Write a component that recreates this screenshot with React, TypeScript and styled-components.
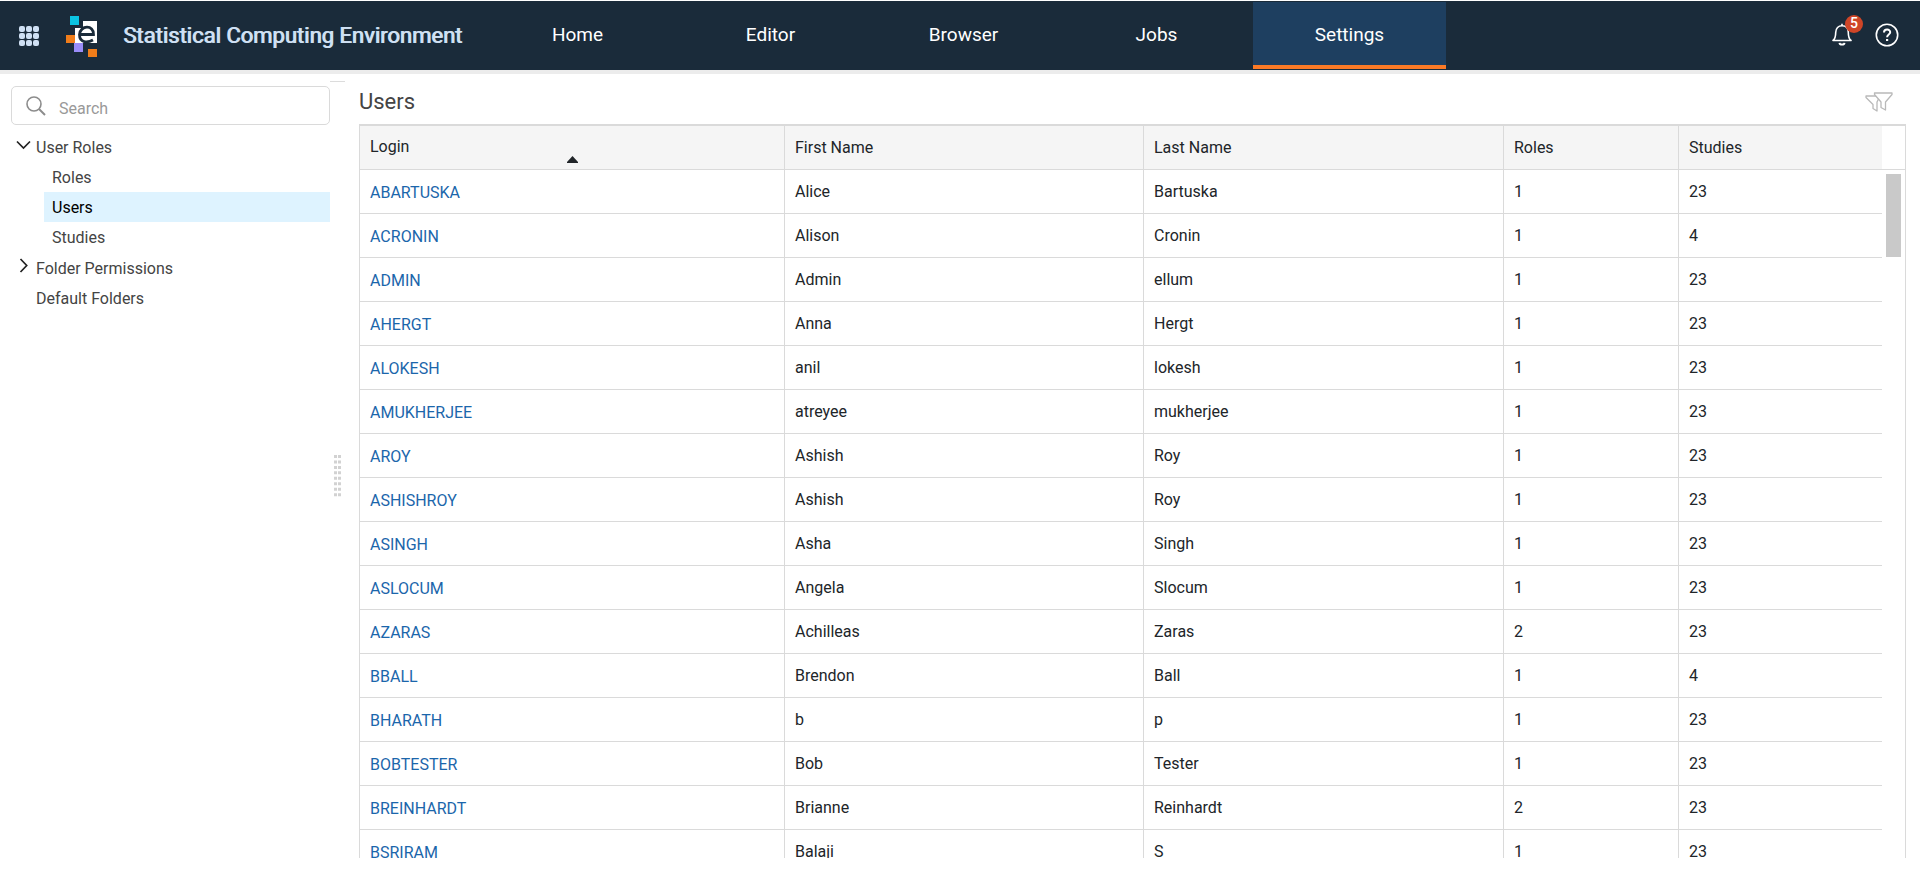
import React from "react";
import styled, { createGlobalStyle } from "styled-components";

const GlobalStyle = createGlobalStyle`
  *, *::before, *::after { box-sizing: border-box; }
  body {
    margin: 0;
    background: #fff;
    color: #212529;
    font: 16px/24px Roboto, "Liberation Sans", sans-serif;
  }
  button, input { font: inherit; }
`;

const Page = styled.div`
  display: flex;
  flex-direction: column;
  height: 100vh;
  padding: 1px 0 12px;
  overflow: hidden;
`;

const Header = styled.header`
  display: flex;
  flex: none;
  align-items: center;
  height: 69px;
  padding: 0 10px 0 19px;
  background: #1a2b3a;
  box-shadow: 0 4px 0 #ececec;
`;

const Brand = styled.div`
  display: flex;
  flex: none;
  align-items: center;
  width: 462px;
`;

const IconButton = styled.button`
  position: relative;
  display: flex;
  padding: 0;
  border: 0;
  background: none;
  cursor: pointer;
`;

const LogoArt = styled.svg`
  flex: none;
  margin: 2px 26px 0 25px;
`;

const BrandName = styled.span`
  color: #cfe0f3;
  font-size: 22px;
  font-weight: 400;
  text-shadow: 1px 0 0 #cfe0f3;
  white-space: nowrap;
`;

const Nav = styled.nav`
  display: flex;
  align-self: stretch;
  padding: 1px 0;
`;

const NavLink = styled.a<{ $active?: boolean }>`
  display: flex;
  align-items: center;
  justify-content: center;
  width: 193px;
  padding-top: 3px;
  border-bottom: 4px solid ${(p) => (p.$active ? "#fb7a26" : "transparent")};
  background: ${(p) => (p.$active ? "#1e3f60" : "transparent")};
  color: #fff;
  font-size: 19px;
  text-decoration: none;
`;

const HeaderActions = styled.div`
  display: flex;
  gap: 23px;
  align-items: center;
  margin-left: auto;
  padding: 0 11px 2px 0;
`;

const Badge = styled.span`
  position: absolute;
  top: -8px;
  right: -11px;
  width: 18px;
  height: 18px;
  border-radius: 50%;
  background: #cf4527;
  color: #fff;
  font-size: 14px;
  font-weight: 500;
  line-height: 17px;
  text-align: center;
`;

const Body = styled.div`
  display: flex;
  flex: 1;
  min-height: 0;
`;

const Sidebar = styled.aside`
  flex: none;
  width: 330px;
  padding: 16px 0 0 11px;
`;

const SearchBox = styled.label`
  display: flex;
  align-items: center;
  gap: 13px;
  height: 39px;
  padding-left: 14px;
  border: 1px solid #dadada;
  border-radius: 5px;
`;

const SearchInput = styled.input`
  flex: 1;
  min-width: 0;
  padding: 7px 0 0;
  border: 0;
  outline: 0;
  background: none;
  color: #212529;
  &::placeholder { color: #999; opacity: 1; }
`;

const Tree = styled.ul`
  margin: 0;
  padding: 7px 0 0;
  list-style: none;
`;

const SubTree = styled.ul`
  margin: 0;
  padding: 0 0 1px 33px;
  list-style: none;
`;

const TreeButton = styled.button`
  display: flex;
  align-items: center;
  width: 100%;
  height: 30px;
  padding: 2px 0 0;
  border: 0;
  background: none;
  color: #444;
  text-align: left;
`;

const Twisty = styled.span`
  display: flex;
  width: 25px;
  padding: 0 0 7px 5px;
`;

const TreeLeaf = styled.a<{ $active?: boolean }>`
  display: block;
  height: 30px;
  padding: 4px 0 0 8px;
  background: ${(p) => (p.$active ? "#def3ff" : "transparent")};
  color: ${(p) => (p.$active ? "#000" : "#444")};
  text-decoration: none;
`;

const Splitter = styled.div`
  display: flex;
  flex: none;
  flex-direction: column;
  align-items: center;
  justify-content: center;
  width: 15px;
  margin-top: 11px;
  padding-top: 10px;
  border-top: 1px solid #dcdcdc;
`;

const Main = styled.main`
  display: flex;
  flex: 1;
  flex-direction: column;
  min-width: 0;
  padding: 0 14px;
`;

const TitleBar = styled.div`
  display: flex;
  flex: none;
  align-items: center;
  justify-content: space-between;
  height: 54px;
  padding: 9px 13px 0 0;
`;

const Title = styled.h1`
  margin: 0;
  color: #444;
  font-size: 22px;
  font-weight: 400;
`;

const Grid = styled.div`
  display: flex;
  flex: 1;
  min-height: 0;
  overflow: hidden;
  border: 1px solid #dadada;
  border-top-width: 2px;
  border-bottom: 0;
`;

const Table = styled.table`
  flex: 1;
  align-self: flex-start;
  min-width: 0;
  table-layout: fixed;
  border-collapse: separate;
  border-spacing: 0;
`;

const HeadCell = styled.th`
  height: 44px;
  padding: 0 10px;
  border-right: 1px solid #dadada;
  border-bottom: 1px solid #dadada;
  background: #f5f5f5;
  font-weight: 400;
  text-align: left;
  &:last-child { border-right: 0; }
`;

const SortButton = styled.button`
  display: grid;
  align-content: start;
  width: 100%;
  height: 43px;
  padding: 9px 0 0;
  border: 0;
  background: none;
  color: inherit;
  text-align: left;
`;

const SortArrow = styled.svg`
  justify-self: center;
  margin-top: -3px;
`;

const Cell = styled.td`
  height: 44px;
  padding: 1px 10px 0;
  border-right: 1px solid #dadada;
  border-bottom: 1px solid #dadada;
  &:last-child { border-right: 0; }
`;

const LoginCell = styled(Cell)`
  padding: 3px 10px 0;
`;

const LoginLink = styled.a`
  color: #1b66ab;
  text-decoration: none;
`;

const Gutter = styled.div`
  flex: none;
  width: 23px;
  padding: 0 4px;
`;

const GutterHead = styled.div`
  height: 44px;
  margin: 0 -4px 4px;
  border-bottom: 1px solid #dadada;
`;

const Thumb = styled.div`
  height: 83px;
  background: #c9c9c9;
`;

const pages = ["Home", "Editor", "Browser", "Jobs", "Settings"];

const columns = [
  { name: "Login", width: 425 },
  { name: "First Name", width: 359 },
  { name: "Last Name", width: 360 },
  { name: "Roles", width: 175 },
  { name: "Studies", width: 203 },
];

const users: [string, string, string, number, number][] = [
  ["ABARTUSKA", "Alice", "Bartuska", 1, 23],
  ["ACRONIN", "Alison", "Cronin", 1, 4],
  ["ADMIN", "Admin", "ellum", 1, 23],
  ["AHERGT", "Anna", "Hergt", 1, 23],
  ["ALOKESH", "anil", "lokesh", 1, 23],
  ["AMUKHERJEE", "atreyee", "mukherjee", 1, 23],
  ["AROY", "Ashish", "Roy", 1, 23],
  ["ASHISHROY", "Ashish", "Roy", 1, 23],
  ["ASINGH", "Asha", "Singh", 1, 23],
  ["ASLOCUM", "Angela", "Slocum", 1, 23],
  ["AZARAS", "Achilleas", "Zaras", 2, 23],
  ["BBALL", "Brendon", "Ball", 1, 4],
  ["BHARATH", "b", "p", 1, 23],
  ["BOBTESTER", "Bob", "Tester", 1, 23],
  ["BREINHARDT", "Brianne", "Reinhardt", 2, 23],
  ["BSRIRAM", "Balaji", "S", 1, 23],
];

const AppsIcon = () => (
  <svg width="22" height="22" fill="#cfe0f3" aria-hidden="true">
    {[1, 8, 15].map((y) =>
      [0, 7, 14].map((x) => <rect key={`${x}-${y}`} x={x} y={y} width="6" height="6" rx="2" />)
    )}
  </svg>
);

const Logo = () => (
  <LogoArt width="31" height="41" viewBox="0 0 31 41" role="img" aria-label="Company logo">
    <path d="M9 12h8V5h14v22H9z" fill="#fff" />
    <path d="M4 0h9v9H4z" fill="#0bc4e2" />
    <path d="M0 19h9v8H0z" fill="#f07d1a" />
    <path d="M8 27h9v9H8z" fill="#9a8cf8" />
    <path d="M22 33h9v8h-9z" fill="#f07d1a" />
    <path d="M13.500 18.500h14c.6-10-13.500-9.500-14 0c0 8.500 8 8.500 13.500 5.500" fill="none" stroke="#1a2b3a" strokeWidth="2.800" />
  </LogoArt>
);

const BellIcon = () => (
  <svg width="20" height="23" viewBox="0 0 20 23" fill="none" stroke="#fff" strokeWidth="1.600" aria-hidden="true">
    <path d="M10 .8v2M1 17.500c2-1.500 2.700-3.500 2.700-8C3.700 5 6.500 2.800 10 2.800s6.300 2.200 6.300 6.700c0 4.500.700 6.500 2.700 8z" strokeLinejoin="round" />
    <path d="M7.500 19.800c.4 2.400 4.600 2.400 5 0" strokeWidth="2" />
  </svg>
);

const HelpIcon = () => (
  <svg width="24" height="24" viewBox="0 0 24 24" fill="none" stroke="#fff" aria-hidden="true">
    <circle cx="12" cy="12" r="10.700" strokeWidth="1.600" />
    <path d="M9 9.600c0-4 6.200-4 6.200-.4 0 2.400-3.100 2.300-3.100 5" strokeWidth="2" />
    <path d="M11 16h2.200v2H11z" fill="#fff" stroke="none" />
  </svg>
);

const SearchIcon = () => (
  <svg width="20" height="20" viewBox="0 0 20 20" fill="none" stroke="#8c8c8c" strokeWidth="1.600" aria-hidden="true">
    <circle cx="8" cy="8" r="7" />
    <path d="M13 13l6 6" strokeWidth="2" />
  </svg>
);

const ChevronIcon = ({ open }: { open?: boolean }) => (
  <svg width="15" height="15" viewBox="0 0 15 15" fill="none" stroke="#222" strokeWidth="1.700" aria-hidden="true">
    <path d={open ? "M1 4.500l6.500 6.500L14 4.500" : "M4.500 1l6.200 6.500L4.500 14"} />
  </svg>
);

const FilterIcon = () => (
  <svg width="28" height="20" viewBox="0 0 28 20" fill="#fff" stroke="#b9b9b9" strokeWidth="1.300" strokeLinejoin="round" aria-hidden="true">
    <path d="M1 4h14l-3 6v9l-4-2.500V12.500L1 5.500z" />
    <path d="M9.500 1H27v1.500L20.500 10v8L16 15.500V10L9.500 2.500z" />
  </svg>
);

const GripDots = () => (
  <svg width="7" height="43" fill="#d2d2d2" aria-hidden="true">
    {Array.from({ length: 8 }, (_, i) => (
      <path key={i} d={`M0 ${1 + i * 5.45}h3v3h-3zM4 ${1 + i * 5.45}h3v3h-3z`} />
    ))}
  </svg>
);

export default function App() {
  return (
    <Page>
      <GlobalStyle />
      <Header>
        <Brand>
          <IconButton type="button" aria-label="Applications"><AppsIcon /></IconButton>
          <Logo />
          <BrandName>Statistical Computing Environment</BrandName>
        </Brand>
        <Nav>
          {pages.map((page) => (
            <NavLink key={page} href={`#${page.toLowerCase()}`} $active={page === "Settings"}>{page}</NavLink>
          ))}
        </Nav>
        <HeaderActions>
          <IconButton type="button" aria-label="Notifications">
            <BellIcon />
            <Badge>5</Badge>
          </IconButton>
          <IconButton type="button" aria-label="Help"><HelpIcon /></IconButton>
        </HeaderActions>
      </Header>
      <Body>
        <Sidebar>
          <SearchBox>
            <SearchIcon />
            <SearchInput type="text" placeholder="Search" aria-label="Search" />
          </SearchBox>
          <Tree>
            <li>
              <TreeButton type="button" aria-expanded="true"><Twisty><ChevronIcon open /></Twisty>User Roles</TreeButton>
              <SubTree>
                <li><TreeLeaf href="#roles">Roles</TreeLeaf></li>
                <li><TreeLeaf href="#users" $active>Users</TreeLeaf></li>
                <li><TreeLeaf href="#studies">Studies</TreeLeaf></li>
              </SubTree>
            </li>
            <li><TreeButton type="button" aria-expanded="false"><Twisty><ChevronIcon /></Twisty>Folder Permissions</TreeButton></li>
            <li><TreeButton type="button"><Twisty />Default Folders</TreeButton></li>
          </Tree>
        </Sidebar>
        <Splitter role="separator" aria-orientation="vertical"><GripDots /></Splitter>
        <Main>
          <TitleBar>
            <Title>Users</Title>
            <IconButton type="button" aria-label="Filters"><FilterIcon /></IconButton>
          </TitleBar>
          <Grid>
            <Table>
              <colgroup>
                {columns.map((c) => <col key={c.name} width={c.width} />)}
              </colgroup>
              <thead>
                <tr>
                  {columns.map((c, i) => (
                    <HeadCell key={c.name} scope="col" aria-sort={i === 0 ? "ascending" : undefined}>
                      {i === 0 ? (
                        <SortButton type="button">
                          {c.name}
                          <SortArrow width="11" height="7" aria-hidden="true"><path d="M0 7V6L5.500 0 11 6v1z" fill="#212529" /></SortArrow>
                        </SortButton>
                      ) : c.name}
                    </HeadCell>
                  ))}
                </tr>
              </thead>
              <tbody>
                {users.map(([login, first, last, roles, studies]) => (
                  <tr key={login}>
                    <LoginCell><LoginLink href={`#${login}`}>{login}</LoginLink></LoginCell>
                    <Cell>{first}</Cell>
                    <Cell>{last}</Cell>
                    <Cell>{roles}</Cell>
                    <Cell>{studies}</Cell>
                  </tr>
                ))}
              </tbody>
            </Table>
            <Gutter>
              <GutterHead />
              <Thumb />
            </Gutter>
          </Grid>
        </Main>
      </Body>
    </Page>
  );
}
